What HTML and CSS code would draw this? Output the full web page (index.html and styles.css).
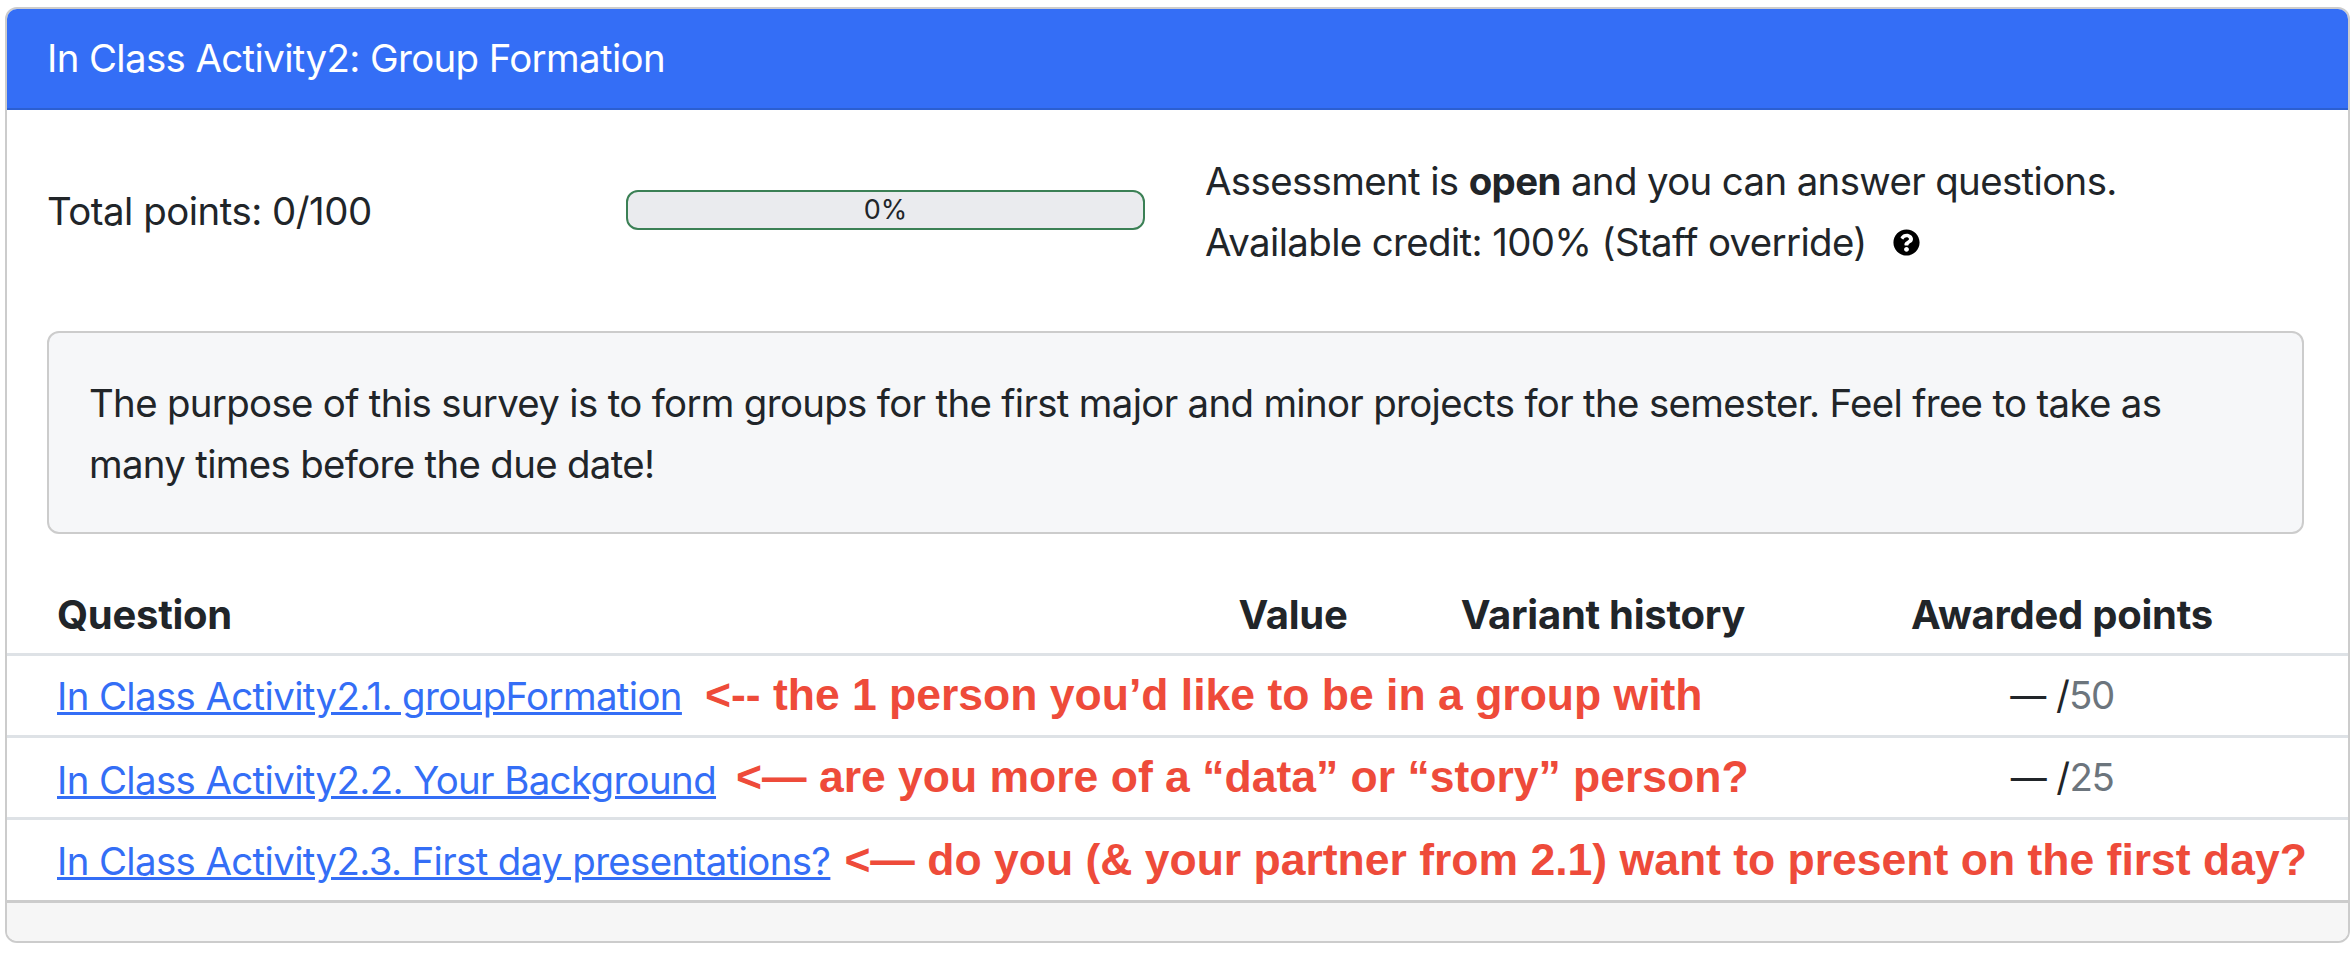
FILE: index.html
```html
<!DOCTYPE html>
<html>
<head>
    <title>In Class Activity2: Group Formation</title>
    <link rel="stylesheet" href="styles.css">
</head>
<body>
    <div class="card">
        <div class="card-header">In Class Activity2: Group Formation</div>
        <div class="card-body">
            <div class="summary">
                <div class="total">Total points: 0/100</div>
                <div class="progress"><span>0%</span></div>
                <div class="status">
                    <div>Assessment is <strong>open</strong> and you can answer questions.</div>
                    <div class="credit">Available credit: 100% (Staff override)
                        <svg class="help" viewBox="0 0 512 512"><path d="M504 256c0 137-111 248-248 248S8 393 8 256 119 8 256 8s248 111 248 248zM262.700 90c-54.500 0-89.300 23-116.600 63.800-3.500 5.300-2.400 12.400 2.700 16.300l34.700 26.300c5.200 3.900 12.600 3 16.700-2.100 17.900-22.700 30.100-35.800 57.300-35.800 20.400 0 45.700 13.100 45.700 32.900 0 15-12.400 22.700-32.600 34-23.600 13.200-54.800 29.700-54.800 70.900V300c0 6.600 5.400 12 12 12h56c6.600 0 12-5.400 12-12v-1.300c0-28.600 83.500-29.800 83.500-107.200 0-58.300-60.400-102.500-117-102.500zM256 339c-25.500 0-46.200 20.700-46.200 46.200 0 25.500 20.700 46.200 46.200 46.200s46.200-20.700 46.200-46.200c0-25.500-20.700-46.200-46.200-46.200z"/></svg>
                    </div>
                </div>
            </div>
            <div class="description">The purpose of this survey is to form groups for the first major and minor projects for the semester. Feel free to take as many times before the due date!</div>
        </div>
        <table class="questions">
            <colgroup>
                <col class="col-question">
                <col class="col-value">
                <col class="col-variant">
                <col class="col-awarded">
            </colgroup>
            <thead>
                <tr>
                    <th>Question</th>
                    <th class="center">Value</th>
                    <th class="center">Variant history</th>
                    <th class="center">Awarded points</th>
                </tr>
            </thead>
            <tbody>
                <tr>
                    <td colspan="3"><a href="#">In Class Activity2.1. groupFormation</a><span class="note note-1">&lt;-- the 1 person you’d like to be in a group with</span></td>
                    <td class="center"><span class="dash">—</span> /<span class="muted">50</span></td>
                </tr>
                <tr>
                    <td colspan="3"><a href="#">In Class Activity2.2. Your Background</a><span class="note note-2">&lt;— are you more of a “data” or “story” person?</span></td>
                    <td class="center"><span class="dash">—</span> /<span class="muted">25</span></td>
                </tr>
                <tr>
                    <td colspan="4"><a href="#">In Class Activity2.3. First day presentations?</a><span class="note note-3">&lt;— do you (&amp; your partner from 2.1) want to present on the first day?</span></td>
                </tr>
            </tbody>
        </table>
        <div class="card-footer"></div>
    </div>
</body>
</html>
```

FILE: styles.css
```css
body {
    margin: 0;
    padding: 7px 2px 0 5px;
    font-family: Inter, "Noto Sans", sans-serif;
    font-size: 38.4px;
    letter-spacing: -0.62px;
    color: #212529;
    background: white;
}
.card {
    border: 2px solid #ccc;
    border-radius: 12px;
    overflow: hidden;
    height: 936px;
    box-sizing: border-box;
    display: flex;
    flex-direction: column;
}
.card-header {
    height: 101px;
    box-sizing: border-box;
    padding-left: 40px;
    line-height: 99px;
    color: white;
    background: #346ef6;
    border-bottom: 2px solid #2c5fd1;
}
.card-body {
    padding: 0 44px 0 40px;
}
.summary {
    display: flex;
    align-items: center;
    height: 204px;
    margin-bottom: 17px;
}
.total {
    width: 579px;
    margin-bottom: 2px;
    letter-spacing: -0.5px;
}
.progress {
    width: 519px;
    height: 40px;
    box-sizing: border-box;
    margin: 0 60px 4px 0;
    border: 2px solid #3b8055;
    border-radius: 12px;
    background: #eaebee;
    font-size: 27px;
    line-height: 36px;
    letter-spacing: 0;
    text-align: center;
}
.status div {
    line-height: 61px;
}
.help {
    width: 27px;
    height: 27px;
    margin-left: 16px;
}
.description {
    height: 203px;
    box-sizing: border-box;
    padding: 40px;
    line-height: 61px;
    letter-spacing: -0.67px;
    background: #f6f7f9;
    border: 2px solid #ccc;
    border-radius: 12px;
}
.questions {
    width: 100%;
    table-layout: fixed;
    border-collapse: collapse;
}
.col-question { width: 1149px; }
.col-value { width: 274px; }
.col-variant { width: 346px; }
th {
    height: 120px;
    padding: 42px 0 0 50px;
    box-sizing: border-box;
    text-align: left;
    font-size: 40px;
    font-weight: 700;
    letter-spacing: -0.27px;
}
th.center, td.center {
    padding-left: 0;
    text-align: center;
}
td {
    height: 82px;
    padding: 0 0 0 50px;
    box-sizing: border-box;
    border-top: 3px solid #dee2e6;
    white-space: nowrap;
}
a {
    color: #346ef6;
}
.dash {
    font-size: 36px;
}
.muted {
    color: #6c757d;
    letter-spacing: -1.5px;
}
.note {
    font-family: "Liberation Sans", sans-serif;
    font-weight: 700;
    font-size: 44.5px;
    letter-spacing: 0;
    color: #ee4b3a;
}
.note-1 { margin-left: 23px; }
.note-2 { margin-left: 20px; vertical-align: 2px; }
.note-3 { margin-left: 14px; }
.card-footer {
    flex: 1;
    background: #f6f6f6;
    border-top: 3px solid #ccc;
}
```
